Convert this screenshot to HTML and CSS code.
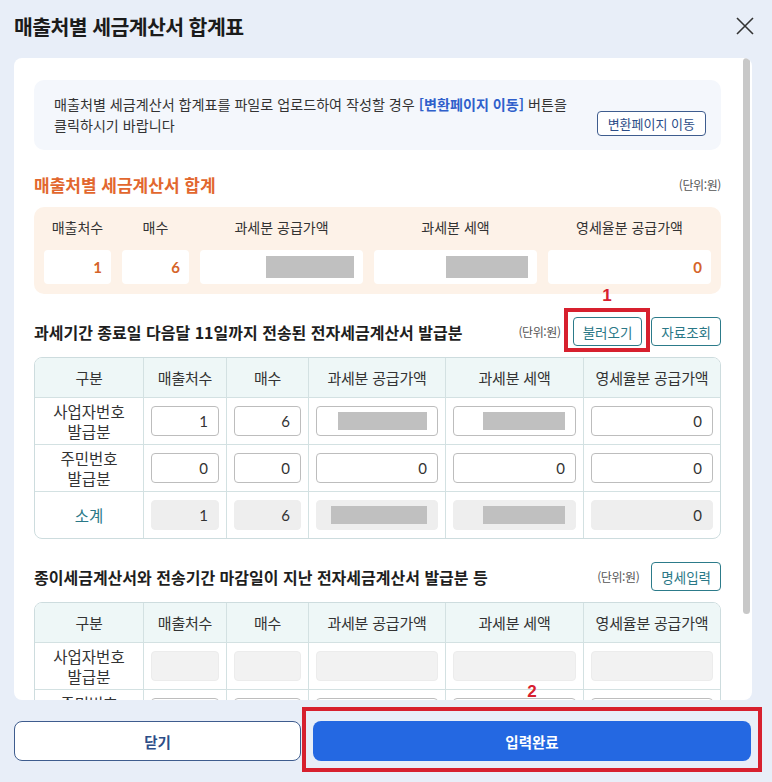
FILE: index.html
```html
<!DOCTYPE html>
<html lang="ko">
<head>
    <meta charset="UTF-8">
    <meta name="viewport" content="width=device-width, initial-scale=1.0">
    <title>매출처별 세금계산서 합계표</title>
    <link rel="stylesheet" href="styles.css">
</head>
<body>
    <div class="modal-head">
        <h1>매출처별 세금계산서 합계표</h1>
        <button class="close" type="button" aria-label="닫기">
            <svg width="20" height="20" viewBox="0 0 20 20"><path d="M2 2 L18 18 M18 2 L2 18" stroke="#333" stroke-width="1.6" fill="none"/></svg>
        </button>
    </div>

    <div class="panel">
        <div class="scroll-thumb"></div>

        <div class="notice">
            <p>매출처별 세금계산서 합계표를 파일로 업로드하여 작성할 경우 <b>[변환페이지 이동]</b> 버튼을<br>클릭하시기 바랍니다</p>
            <button class="btn btn-navy" type="button">변환페이지 이동</button>
        </div>

        <div class="sum-head">
            <h2>매출처별 세금계산서 합계</h2>
            <span class="unit">(단위:원)</span>
        </div>
        <div class="sum-box">
            <span class="lbl">매출처수</span>
            <span class="lbl">매수</span>
            <span class="lbl">과세분 공급가액</span>
            <span class="lbl">과세분 세액</span>
            <span class="lbl">영세율분 공급가액</span>
            <div class="sum-field">1</div>
            <div class="sum-field">6</div>
            <div class="sum-field"><span class="redact r-88"></span></div>
            <div class="sum-field"><span class="redact r-82"></span></div>
            <div class="sum-field">0</div>
        </div>

        <div class="sec-head">
            <h3>과세기간 종료일 다음달 11일까지 전송된 전자세금계산서 발급분</h3>
            <span class="unit">(단위:원)</span>
            <span class="marked">
                <button class="btn btn-teal" type="button">불러오기</button>
                <span class="mark mark-1"><em>1</em></span>
            </span>
            <button class="btn btn-teal" type="button">자료조회</button>
        </div>
        <div class="table-wrap">
            <table class="grid">
                <colgroup>
                    <col class="c-type"><col class="c-cnt"><col class="c-num"><col class="c-amt"><col class="c-tax"><col class="c-zero">
                </colgroup>
                <thead>
                    <tr><th>구분</th><th>매출처수</th><th>매수</th><th>과세분 공급가액</th><th>과세분 세액</th><th>영세율분 공급가액</th></tr>
                </thead>
                <tbody>
                    <tr>
                        <th>사업자번호<br>발급분</th>
                        <td><div class="cell">1</div></td>
                        <td><div class="cell">6</div></td>
                        <td><div class="cell"><span class="redact r-89"></span></div></td>
                        <td><div class="cell"><span class="redact r-82"></span></div></td>
                        <td><div class="cell">0</div></td>
                    </tr>
                    <tr>
                        <th>주민번호<br>발급분</th>
                        <td><div class="cell">0</div></td>
                        <td><div class="cell">0</div></td>
                        <td><div class="cell">0</div></td>
                        <td><div class="cell">0</div></td>
                        <td><div class="cell">0</div></td>
                    </tr>
                    <tr class="total">
                        <th>소계</th>
                        <td><div class="cell ro">1</div></td>
                        <td><div class="cell ro">6</div></td>
                        <td><div class="cell ro"><span class="redact r-96"></span></div></td>
                        <td><div class="cell ro"><span class="redact r-82"></span></div></td>
                        <td><div class="cell ro">0</div></td>
                    </tr>
                </tbody>
            </table>
        </div>

        <div class="sec-head">
            <h3>종이세금계산서와 전송기간 마감일이 지난 전자세금계산서 발급분 등</h3>
            <span class="unit">(단위:원)</span>
            <button class="btn btn-teal" type="button">명세입력</button>
        </div>
        <div class="table-wrap">
            <table class="grid">
                <colgroup>
                    <col class="c-type"><col class="c-cnt"><col class="c-num"><col class="c-amt"><col class="c-tax"><col class="c-zero">
                </colgroup>
                <thead>
                    <tr><th>구분</th><th>매출처수</th><th>매수</th><th>과세분 공급가액</th><th>과세분 세액</th><th>영세율분 공급가액</th></tr>
                </thead>
                <tbody>
                    <tr>
                        <th>사업자번호<br>발급분</th>
                        <td><div class="cell ro-light"></div></td>
                        <td><div class="cell ro-light"></div></td>
                        <td><div class="cell ro-light"></div></td>
                        <td><div class="cell ro-light"></div></td>
                        <td><div class="cell ro-light"></div></td>
                    </tr>
                    <tr>
                        <th>주민번호<br>발급분</th>
                        <td><div class="cell"></div></td>
                        <td><div class="cell"></div></td>
                        <td><div class="cell"></div></td>
                        <td><div class="cell"></div></td>
                        <td><div class="cell"></div></td>
                    </tr>
                    <tr class="total">
                        <th>소계</th>
                        <td><div class="cell ro"></div></td>
                        <td><div class="cell ro"></div></td>
                        <td><div class="cell ro"></div></td>
                        <td><div class="cell ro"></div></td>
                        <td><div class="cell ro"></div></td>
                    </tr>
                </tbody>
            </table>
        </div>
    </div>

    <div class="modal-foot">
        <button class="btn-foot btn-close" type="button">닫기</button>
        <div class="foot-mark">
            <em class="mark-no">2</em>
            <button class="btn-foot btn-submit" type="button">입력완료</button>
        </div>
    </div>
</body>
</html>
```

FILE: styles.css
```css
body {
    margin: 0;
    background-color: #e8eef8;
    font-family: "Noto Sans CJK KR", sans-serif;
    color: #333;
}
button {
    font-family: "Noto Sans CJK KR", sans-serif;
    cursor: pointer;
}

/* header */
.modal-head {
    display: flex;
    align-items: center;
    justify-content: space-between;
    height: 52px;
    padding: 0 17px 0 14px;
    margin-bottom: 6px;
}
h1 {
    margin: 0;
    font-size: 20.5px;
    font-weight: 700;
    color: #1b1b1b;
    letter-spacing: -0.6px;
}
.close {
    background: none;
    border: 0;
    padding: 0;
    width: 20px;
    height: 20px;
}

/* white scroll panel */
.panel {
    position: relative;
    margin-left: 14px;
    width: 738px;
    height: 642px;
    box-sizing: border-box;
    padding: 22px 31px 0 20px;
    background-color: #fff;
    border-radius: 8px;
    overflow: hidden;
}
.scroll-thumb {
    position: absolute;
    top: 0;
    right: 2px;
    width: 7px;
    height: 556px;
    border-radius: 4px;
    background-color: #c8c8c8;
}

.notice {
    display: flex;
    justify-content: space-between;
    align-items: flex-end;
    padding: 14px 15px 14px 20px;
    background-color: #f4f7fc;
    border-radius: 10px;
}
.notice p {
    margin: 0;
    font-size: 14.1px;
    line-height: 21px;
    color: #333;
    white-space: nowrap;
}
.notice b {
    color: #2f5fcb;
}

.btn {
    height: 29px;
    padding: 0 10px;
    background-color: #fff;
    border-radius: 4px;
    font-size: 13.5px;
    white-space: nowrap;
}
.btn-navy {
    height: 25px;
    padding: 0 10px;
    border: 1px solid #3e5c8e;
    color: #2c4d88;
    font-size: 13px;
}
.btn-teal {
    padding: 0 9px;
    border: 1px solid #2c7b8a;
    color: #2a7887;
}

/* summary */
.sum-head {
    display: flex;
    justify-content: space-between;
    align-items: center;
    height: 24px;
    margin-top: 22px;
}
h2 {
    margin: 0;
    font-size: 17px;
    font-weight: 700;
    color: #e2672e;
}
.unit {
    font-size: 12px;
    color: #555;
    letter-spacing: -0.4px;
}
.sum-box {
    display: grid;
    grid-template-columns: 67px 67px 1fr 1fr 1fr;
    column-gap: 11px;
    row-gap: 13px;
    margin-top: 11px;
    padding: 10px;
    background-color: #fdf2e8;
    border-radius: 10px;
}
.sum-box .lbl {
    text-align: center;
    font-size: 14px;
    line-height: 20px;
    color: #333;
}
.sum-field {
    display: flex;
    align-items: center;
    justify-content: flex-end;
    height: 34px;
    padding-right: 9px;
    background-color: #fff;
    border-radius: 4px;
    font-family: Lato, "Noto Sans CJK KR", sans-serif;
    font-size: 15px;
    font-weight: 700;
    color: #d5642a;
}
.redact {
    display: inline-block;
    height: 18px;
    background-color: #c0c0c0;
}
.sum-field .redact {
    height: 22px;
}
.r-82 { width: 82px; }
.r-88 { width: 88px; }
.r-89 { width: 89px; }
.r-96 { width: 96px; }

/* section heads */
.sec-head {
    display: flex;
    align-items: center;
    gap: 9px;
    margin-top: 23px;
}
h3 {
    flex: 1;
    margin: 0;
    font-size: 16px;
    font-weight: 700;
    color: #1e1e1e;
    white-space: nowrap;
}
.sec-head .unit {
    margin-right: 3px;
}

/* tables */
.table-wrap {
    margin-top: 11px;
    border: 1px solid #cddcde;
    border-radius: 8px;
    overflow: hidden;
}
.grid {
    width: 100%;
    table-layout: fixed;
    border-collapse: separate;
    border-spacing: 0;
    font-size: 15px;
}
.c-type { width: 109px; }
.c-cnt { width: 83px; }
.c-num { width: 82px; }
.c-amt { width: 137px; }
.c-tax { width: 138px; }
.c-zero { width: 136px; }
.grid th,
.grid td {
    padding: 0 7px;
    border-right: 1px solid #d3e1e2;
    border-bottom: 1px solid #d3e1e2;
    text-align: center;
}
.grid th:last-child,
.grid td:last-child {
    border-right: 0;
}
.grid tbody tr:last-child th,
.grid tbody tr:last-child td {
    border-bottom: 0;
}
.grid thead th {
    height: 39px;
    background-color: #eef7f7;
    font-weight: 400;
    color: #333;
    letter-spacing: -0.2px;
    white-space: nowrap;
}
.grid tbody th {
    height: 46px;
    font-size: 15.5px;
    font-weight: 400;
    line-height: 20px;
    color: #333;
}
.grid .total th {
    color: #2a7887;
}
.cell {
    display: flex;
    align-items: center;
    justify-content: flex-end;
    height: 28px;
    padding-right: 10px;
    border: 1px solid #bdbdbd;
    border-radius: 4px;
    background-color: #fff;
    font-family: Lato, "Noto Sans CJK KR", sans-serif;
    font-size: 15px;
    color: #333;
}
.cell.ro {
    border-color: #eeeeee;
    background-color: #eeeeee;
}
.cell.ro-light {
    border-color: #ececec;
    background-color: #f2f2f2;
}

/* footer */
.modal-foot {
    display: flex;
    align-items: flex-start;
    gap: 12px;
    padding: 21px 21px 0 14px;
}
.btn-foot {
    display: block;
    width: 100%;
    height: 40px;
    border-radius: 8px;
    font-size: 14.5px;
    font-weight: 700;
}
.btn-close {
    flex: 0 0 287px;
    border: 1px solid #3e5c8e;
    background-color: #fff;
    color: #2c4d88;
}
.btn-submit {
    border: 0;
    background-color: #2468e2;
    color: #fff;
}

/* red guide marks */
.marked {
    position: relative;
    display: inline-block;
}
.mark {
    position: absolute;
    box-sizing: border-box;
    border: 4px solid #d7202e;
    pointer-events: none;
}
.mark em,
.mark-no {
    position: absolute;
    left: 0;
    right: 0;
    text-align: center;
    font-family: "Liberation Sans", Arial, sans-serif;
    font-style: normal;
    font-weight: 700;
    font-size: 17px;
    line-height: 18px;
    color: #d7202e;
}
.mark-1 {
    top: -9px;
    left: -9px;
    right: -8px;
    bottom: -6px;
}
.mark-1 em {
    top: -25px;
}
.foot-mark {
    position: relative;
    flex: 1;
    margin: -14px -11px 0 -11px;
    padding: 10px 7px 7px;
    border: 4px solid #d7202e;
}
.mark-no {
    top: -28px;
}
```
